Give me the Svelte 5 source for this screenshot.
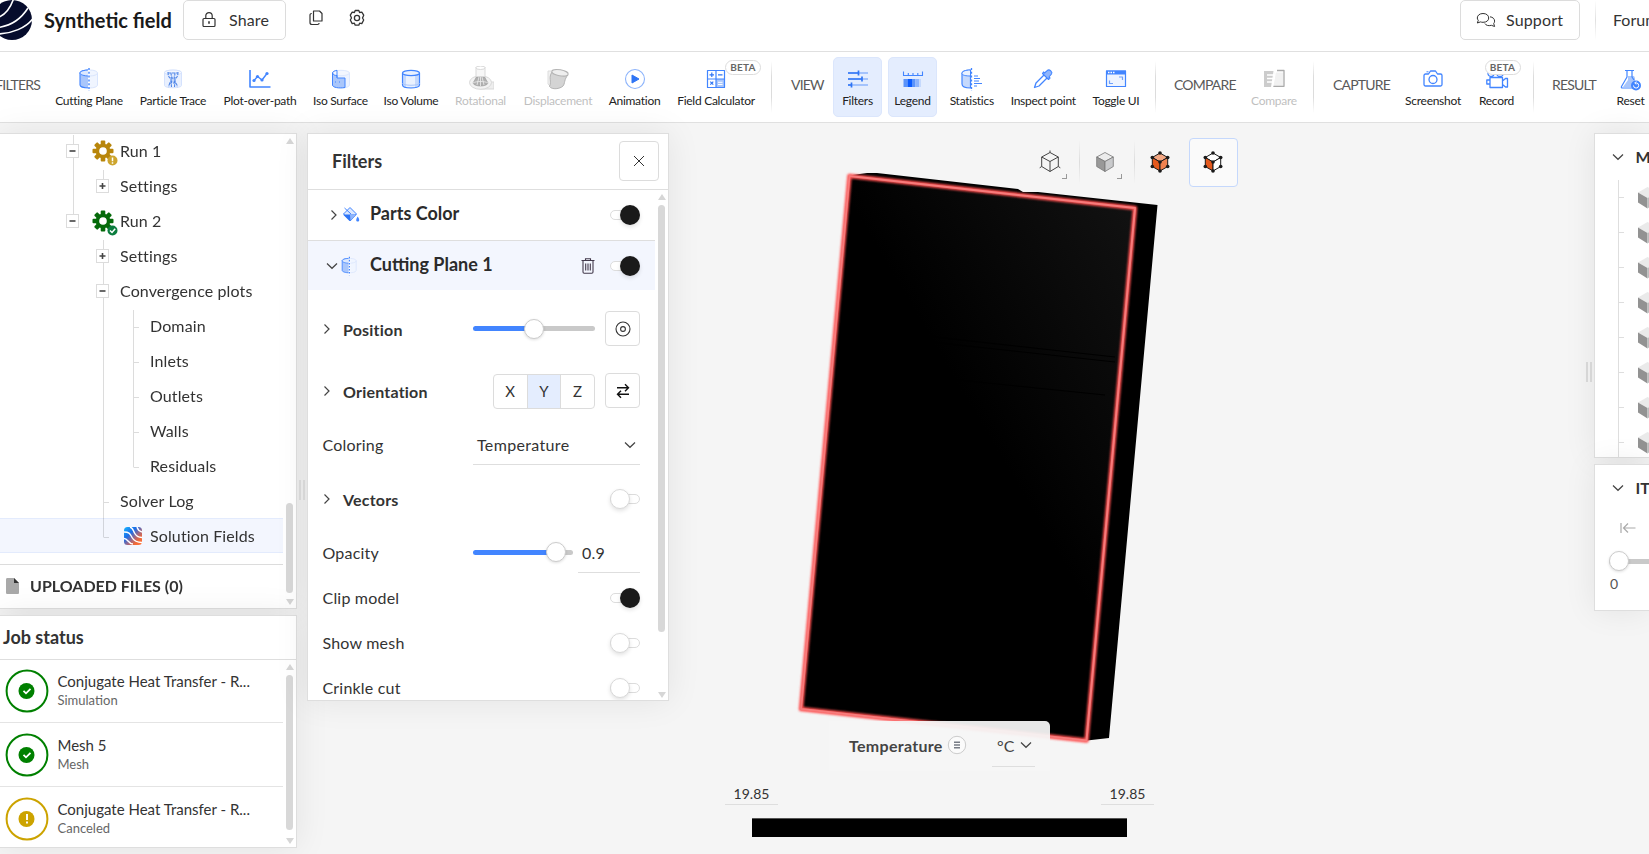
<script>
  const toolbar = [
    { kind: 'label', text: 'FILTERS', w: 47, end: true },
    { icon: 'cut', text: 'Cutting Plane', w: 84 },
    { icon: 'particle', text: 'Particle Trace', w: 84 },
    { icon: 'plot', text: 'Plot-over-path', w: 90 },
    { icon: 'isosurface', text: 'Iso Surface', w: 71 },
    { icon: 'isovolume', text: 'Iso Volume', w: 70 },
    { icon: 'rotational', text: 'Rotational', w: 69, off: true },
    { icon: 'displace', text: 'Displacement', w: 86, off: true },
    { icon: 'play', text: 'Animation', w: 67 },
    { icon: 'calc', text: 'Field Calculator', w: 96, beta: 27 },
    { kind: 'sep', w: 15 },
    { kind: 'label', text: 'VIEW', w: 51 },
    { icon: 'filters', text: 'Filters', w: 55, on: true },
    { icon: 'legend', text: 'Legend', w: 55, on: true },
    { icon: 'stats', text: 'Statistics', w: 63.5 },
    { icon: 'pipette', text: 'Inspect point', w: 79.5 },
    { icon: 'toggle', text: 'Toggle UI', w: 66 },
    { kind: 'sep', w: 13 },
    { kind: 'label', text: 'COMPARE', w: 84 },
    { icon: 'compare', text: 'Compare', w: 56, off: true },
    { kind: 'sep', w: 22 },
    { kind: 'label', text: 'CAPTURE', w: 76, pad: 9 },
    { icon: 'camera', text: 'Screenshot', w: 66 },
    { icon: 'record', text: 'Record', w: 61, beta: 6 },
    { kind: 'sep', w: 13 },
    { kind: 'label', text: 'RESULT', w: 69 },
    { icon: 'reset', text: 'Reset', w: 43 }
  ];

  const tree = [
    { text: 'Run 1', gear: '#b8860b', box: '-', at: 66, warn: true },
    { text: 'Settings', box: '+', at: 96 },
    { text: 'Run 2', gear: '#056a0a', box: '-', at: 66 },
    { text: 'Settings', box: '+', at: 96 },
    { text: 'Convergence plots', box: '-', at: 96 },
    { text: 'Domain', deep: true },
    { text: 'Inlets', deep: true },
    { text: 'Outlets', deep: true },
    { text: 'Walls', deep: true },
    { text: 'Residuals', deep: true },
    { text: 'Solver Log' },
    { text: 'Solution Fields', deep: true, selected: true }
  ];

  const jobs = [
    { title: 'Conjugate Heat Transfer - R...', sub: 'Simulation', ok: true },
    { title: 'Mesh 5', sub: 'Mesh', ok: true },
    { title: 'Conjugate Heat Transfer - R...', sub: 'Canceled', ok: false }
  ];

  const corners = [[0, -9], [7.7, -4.5], [7.7, 4.5], [0, 9], [-7.7, 4.5], [-7.7, -4.5], [0, 0]];
</script>

{#snippet chevron(dir)}
  <svg class="chev" width="12" height="12" viewBox="0 0 12 12" fill="none" stroke="currentColor" stroke-width="1.2">
    {#if dir === 'right'}<path d="M3.5 1.5 8 6l-4.500 4.500" />{:else}<path d="M1 3.500 6 8.300l5-4.800" />{/if}
  </svg>
{/snippet}

{#snippet toggle(on)}
  <span class="toggle" class:on><i></i><b></b></span>
{/snippet}

{#snippet cutIcon()}
  <path d="M11 2C6 2 2 3.300 2 5v12c0 1.700 4 3 9 3z" fill="#a9c6fb" stroke="#4285ff" stroke-width="1.100" />
  <path d="M11 2C6 2 2 3.300 2 5s4 3 9 3z" fill="#dce8fe" stroke="#4285ff" stroke-width="1" />
  <path d="M11 2c5 0 8.500 1.300 8.500 3v12c0 1.700-3.500 3-8.500 3z" fill="#f0f5ff" stroke="#d9e5fd" stroke-width="1" />
  <path d="M11 8c5 0 8.500-1.300 8.500-3" stroke="#d9e5fd" fill="none" />
  <path d="M11 0v23" stroke="#fff" stroke-width="2" /><path d="M11 0v23" stroke="#4285ff" stroke-width="1.400" stroke-dasharray="2 1.800" />
{/snippet}

{#snippet icon(name)}
  <svg class="ticon" width="26" height="26" viewBox="-2 -2 26 26" fill="none" stroke-linejoin="round">
    {#if name === 'cut'}
      {@render cutIcon()}
    {:else if name === 'particle'}
      <path d="M2.500 4.500v13c0 3 17 3 17 0v-13c0-3-17-3-17 0z" fill="#e9f0fe" stroke="#d5e2fd" />
      <ellipse cx="11" cy="4.500" rx="8.500" ry="2.500" fill="#f3f7ff" stroke="#d5e2fd" />
      <g stroke="#4f86e8" stroke-width="1.100" stroke-dasharray="3 1"><path d="M6 4c0 7 3 5 3 8.500s-3 3.500-2 6.500M9 4.500c0 3 1 4 1 7s-1 4-.5 7.500M13 4.500c0 3-1 4-1 7s1 4 .5 7.500M16 4c0 7-3 5-3 8.500s3 3.500 2 6.500M6 5h10M8 10h6M7 15h8" /></g>
    {:else if name === 'plot'}
      <path d="M1 2v17h20.500" stroke="#4285ff" stroke-width="1.600" />
      <path d="m5 12.500 3.500-4 4.500 3.500 5-6.500" stroke="#4285ff" stroke-width="1.400" />
      <g fill="#4285ff"><circle cx="5" cy="12.500" r="1.600" /><circle cx="8.500" cy="8.500" r="1.600" /><circle cx="13" cy="12" r="1.600" /><circle cx="18" cy="5.500" r="1.600" /></g>
    {:else if name === 'isosurface'}
      <path d="M2.500 5v12c0 4 17 4 17 0V5z" fill="#edf3ff" stroke="#dde8fe" /><ellipse cx="11" cy="5" rx="8.500" ry="2.700" fill="#f3f7ff" stroke="#dde8fe" />
      <path d="M2.500 5c1 2 2 2.500 4.500 2.500V10h8v9.500C9 20.500 2.500 19.500 2.500 17z" fill="#a9c6fb" stroke="#4285ff" />
      <path d="M2.500 5c0-1.300 2-2.300 4.500-2.700V9.500" stroke="#4285ff" /><path d="M5 14h1m3 0h1" stroke="#4285ff" />
    {:else if name === 'isovolume'}
      <path d="M2.500 5v12c0 4 17 4 17 0V5z" fill="#c5d9fd" stroke="#4285ff" stroke-width="1.200" />
      <path d="M6 8h9v11H6z" fill="#fff" opacity=".65" /><ellipse cx="11" cy="5" rx="8.500" ry="2.700" fill="#e9f1ff" stroke="#4285ff" stroke-width="1.200" /><path d="M19.500 15c0 3-17 3-17 0" stroke="#a9c6fb" />
    {:else if name === 'rotational'}
      <g stroke="#d9d9d9"><path d="M21 14h3v7H10z" fill="#eee" /><ellipse cx="10.500" cy="14.500" rx="11" ry="6.800" fill="#f2f2f2" /><path d="M6 -1v12h9V-1z" fill="#f7f7f7" /><ellipse cx="10.500" cy="-.2" rx="4.500" ry="1.700" fill="#fff" /></g>
      <path d="M6.500 9h8l3.500 6c-1 4-14 4-15 0z" fill="#b0b0b0" stroke="#999" stroke-width=".6" /><path d="m9 9-2 8m3.500-8v9m1.500-9 2 8M3 15c3-2 12-2 15 0" stroke="#eee" stroke-width=".8" />
    {:else if name === 'displace'}
      <path d="M1 3v13c2 2.500 4 3 6 3V3z" fill="#f1f1f1" stroke="#ddd" /><path d="M5 4C1 10 5 13 2.500 18.500 5 22 13 21 16 18c2-2 1-7 5-11z" fill="#d4d4d4" stroke="#b3b3b3" />
      <ellipse cx="13" cy="4.800" rx="8.300" ry="3" transform="rotate(10 13 4.800)" fill="#eee" stroke="#b3b3b3" />
    {:else if name === 'play'}
      <circle cx="11" cy="11" r="9.500" stroke="#8db4fb" stroke-width="1.100" /><path d="M8 7v8l7-4z" fill="#2f75f5" stroke="#2f75f5" />
    {:else if name === 'calc'}
      <path d="M11 11h9v8.500h-9z" fill="#a9c6fb" /><path d="M2.500 2.500h17v17h-17zM11 2.500v17M2.500 11h17" stroke="#4285ff" stroke-width="1.200" />
      <path d="M4.500 6.800h4.500M6.800 4.500v4.500M13 6.800h4.500M5.300 13.700l3 3m0-3-3 3" stroke="#2f75f5" stroke-width="1.200" /><path d="M13 14.300h4.500M13 16.500h4.500" stroke="#fff" />
    {:else if name === 'filters'}
      <path d="M1 5h20M1 11h20M1 17h20" stroke="#8fb5fc" stroke-width="1.600" /><path d="M1 5h10.500M1 11h14M1 17h4M11.500 2.500v5M15 8.500v5M4.500 14.500v5" stroke="#2f75f5" stroke-width="1.700" />
    {:else if name === 'legend'}
      <path d="M1.500 3.500v4h19v-4M6.300 5v2.500M11 5v2.500M15.800 5v2.500" stroke="#4285ff" stroke-width="1.100" />
      <path d="M1.500 11h4v8h-4z" fill="#5b93fa" /><path d="M5.500 11H10v8H5.500z" fill="#0b5cff" /><path d="M10 11h3.500v8H10z" fill="#5b93fa" /><path d="M13.500 11H17v8h-3.500z" fill="#8fb5fc" /><path d="M17 11h2v8h-2z" fill="#c5d9fd" />
    {:else if name === 'stats'}
      <path d="M9.500 2C4 2 1 3.500 1 5.500V16c0 2.500 3 4 8.500 4z" fill="#c5d9fd" stroke="#4285ff" stroke-width="1.200" /><path d="M1 5.500C1 7.300 5 8 9.500 8V2C4 2 1 3.500 1 5.500" fill="#e9f1ff" stroke="#4285ff" />
      <path d="M10.500 0v23" stroke="#4285ff" stroke-width="1.300" stroke-dasharray="2 1.800" /><path d="M13 8h4M13 10.500h6M13 13h5M13 15.500h8M13 18h3" stroke="#4285ff" stroke-width="1" />
    {:else if name === 'pipette'}
      <path d="M12.500 6.500 4 15l-1.500 4.500L7 18l8.500-8.500" fill="#fff" stroke="#4285ff" stroke-width="1.300" /><path d="m10.500 5.500 6 6 1.500-1.500-1-1 2.500-3c1.500-2-2-5-4-3.700l-3 2.700-1-1z" fill="#8fb5fc" stroke="#4285ff" stroke-width="1.100" />
    {:else if name === 'toggle'}
      <path d="M1.500 3h19v15.500h-19z" fill="#eef4ff" stroke="#4285ff" stroke-width="1.200" /><path d="M1 2.500h20v4H1z" fill="#4285ff" /><path d="M3 4.500h1.500m1 0H7m1 0h1.500" stroke="#fff" stroke-width="1.300" /><path d="M14 9h3.500v3M8 15.500H4.500v-3" stroke="#6fa0fb" stroke-width="1.200" />
    {:else if name === 'compare'}
      <path d="M1 3h9.500L8 19H1z" fill="#ccc" /><path d="M11 4.500h9.500V18H10" fill="#f1f1f1" /><path d="M14 2.500h7v15.800H10" stroke="#aaa" stroke-width="1.300" /><path d="M4 7h7M4 10.500h8M4 14h6" stroke="#fff" stroke-width="1.500" /><path d="m13 0-4 22" stroke="#fff" stroke-width="1.400" />
    {:else if name === 'camera'}
      <path d="M3.500 6h3L8.500 3h5l2 3h3c.7 0 1.500.600 1.500 1.500v9c0 .8-.7 1.500-1.500 1.500h-15c-.8 0-1.500-.7-1.500-1.500v-9C2 6.600 2.700 6 3.500 6z" stroke="#4285ff" stroke-width="1.300" /><circle cx="11" cy="11.500" r="4" stroke="#4285ff" stroke-width="1.300" /><path d="M4.500 3.800h2" stroke="#4285ff" />
    {:else if name === 'record'}
      <g stroke="#4285ff" stroke-width="1.300"><circle cx="5" cy="5.500" r="3" /><circle cx="14" cy="5" r="3.500" /><path d="M4 9.500h12.500v10H4zM4 12H.8v4H4M16.500 13l3-2.500h2v8.500h-2l-3-2.500" fill="#fff" /></g>
    {:else if name === 'reset'}
      <path d="M8 8v4l-5 7h12V10l-1-2z" fill="#a9c6fb" /><path d="M5 2.500h9M7 3v6L1.500 18.500c-.5 1 0 1.500 1 1.500H14M12 3v6l2 3" stroke="#4285ff" stroke-width="1.200" />
      <circle cx="16" cy="17.500" r="5" fill="#4285ff" /><path d="M13.500 17.500a2.600 2.600 0 1 0 2.600-2.600M16.500 13.700l-1.800 1.200 1.600 1.500" stroke="#fff" stroke-width="1" />
    {/if}
  </svg>
{/snippet}

<div class="app">
  <header>
    <svg class="logo" width="32" height="40" viewBox="0 0 32 40">
      <circle cx="12" cy="20" r="20" fill="#060c2c" />
      <g fill="none" stroke="#fff" stroke-width="1.600">
        <path d="M-2 17.500C5 15 10 9 13.500-1" /><path d="M-2 27.500C10 26 21 19 28 8" /><path d="M-2 34C12 33.500 26 28 33 18.500" />
      </g>
    </svg>
    <h1>Synthetic field</h1>
    <button class="hbtn share">
      <svg width="14" height="16" viewBox="0 0 14 16" fill="none" stroke="#333" stroke-width="1.200"><rect x="1" y="6.500" width="12" height="8" rx="1" /><path d="M3.800 6.500V3.800a3.200 3.200 0 0 1 6.400 0v2.700" /><path d="M7 9.300v2.500" stroke-width="1.600" /></svg>
      <span>Share</span>
    </button>
    <svg class="copy" width="14" height="16" viewBox="0 0 14 16" fill="none" stroke="#333" stroke-width="1.200" stroke-linejoin="round"><path d="M4.500 1h6L13 3.500V11H4.500z" /><path d="M2.800 3.500C1.500 3.500 1 4 1 5v7.500C1 14 1.600 14.500 3 14.500h5.500c1 0 1.600-.5 1.600-1.500" /></svg>
    <svg class="cog" width="18" height="18" viewBox="0 0 18 18" fill="none" stroke="#333" stroke-width="1.300" stroke-linejoin="round"><path d="M7.200 1.500h3.600l.8 2 2.200-.3 1.900 3L14.500 9l1.200 2-1.900 3.600-2.200-.4-.8 2H7.200l-.8-2-2.200.4L2.300 11l1.200-2-1.200-2.800 1.900-3 2.200.3z" /><circle cx="9" cy="9" r="2.600" /></svg>
    <div class="grow"></div>
    <button class="hbtn support">
      <svg width="20" height="17" viewBox="0 0 20 17" fill="none" stroke="#333" stroke-width="1" stroke-linejoin="round"><path d="M7 1.500c3.500 0 5.700 1.900 5.700 4.500S10.500 10.300 7 10.300c-.9 0-1.700-.1-2.500-.4L1.300 11l1-2.700C1.600 7.600 1.300 6.800 1.300 6 1.300 3.400 3.600 1.500 7 1.500z" /><path d="M14 4.800c2.800.3 4.600 2 4.600 4.300 0 .9-.3 1.700-.9 2.400l.9 3-3.200-1.200c-3 .9-5.600 0-6.500-1.800" /></svg>
      <span>Support</span>
    </button>
    <i class="hsep"></i>
    <span class="forum">Forum</span>
  </header>

  <nav>
    {#each toolbar as t}
      {#if t.kind === 'label'}
        <span class="label" class:end={t.end} style:width="{t.w}px" style:padding-left="{t.end ? 0 : (t.pad ?? 12)}px">{t.text}</span>
      {:else if t.kind === 'sep'}
        <span class="sep" style:width="{t.w}px"><i></i></span>
      {:else}
        <button class="tool" class:on={t.on} class:off={t.off} style:width="{t.w}px">
          {@render icon(t.icon)}
          <span>{t.text}</span>
          {#if t.beta}<em style:margin-left="{t.beta}px">BETA</em>{/if}
        </button>
      {/if}
    {/each}
  </nav>

  <main>
    <aside class="left">
      <section class="panel treepanel">
        <svg class="guides" width="283" height="430" stroke="#dcdcdc" fill="none">
          <path d="M73.500 1V88M103.500 36v18M103.500 106V403.500M133.500 176V333.500M104 368.500h5M104 403.500h5M134 193.500h5M134 228.500h5M134 263.500h5M134 298.500h5M134 333.500h5" />
        </svg>
        <div class="rows">
        {#each tree as r}
          <div class="row" class:selected={r.selected} class:deep={r.deep}>
            {#if r.box}
              <svg class="exp" width="13" height="14" style:margin-left="{r.at}px"><rect x=".5" y=".5" width="12" height="13" fill="#fff" stroke="#dcdcdc" /><path d={r.box === '+' ? 'M3.500 7h6M6.500 4v6' : 'M3.500 7h6'} stroke="#444" stroke-width="1.600" /></svg>
            {/if}
            {#if r.gear}
              <svg class="gear" width="27" height="26" viewBox="-11 -11 27 26">
                <g fill={r.gear}>{#each [0, 45, 90, 135] as a}<rect x="-2.300" y="-10.500" width="4.600" height="21" rx="1" transform="rotate({a})" />{/each}<circle r="7.300" /></g>
                <circle r="3.800" fill="#fff" />
                <circle cx="9.500" cy="9.500" r="5" fill={r.warn ? '#cda52e' : '#0b7d3e'} />
                {#if r.warn}<path d="M9.500 6.500v3.800m0 1v1.400" stroke="#fff" stroke-width="1.500" />{:else}<path d="m7 9.500 2 2 3.200-3.700" fill="none" stroke="#fff" stroke-width="1.500" />{/if}
              </svg>
            {/if}
            {#if r.selected}
              <svg class="sol" width="18" height="18" viewBox="0 0 18 18">
                <defs><linearGradient id="sf" x1="0" y1="0" x2="1" y2="1"><stop offset="0" stop-color="#16b5ff" /><stop offset=".35" stop-color="#1c6de8" /><stop offset=".6" stop-color="#a9677c" /><stop offset=".78" stop-color="#f26a36" /><stop offset="1" stop-color="#ff7a45" /></linearGradient></defs>
                <rect width="18" height="18" rx="3.500" fill="url(#sf)" />
                <g fill="none" stroke="#fff" stroke-width="1.400"><path d="M0 5c6 0 6 2 8 5.500s5 5 10 5" /><path d="M0 11.500c4 0 4 5 9 5.500" /><path d="M6 0c3 1 3 3 4.500 6S14 10.500 18 10.500" /><path d="M13 0c.5 2 2 4 5 5" /></g>
              </svg>
            {/if}
            <span>{r.text}</span>
          </div>
        {/each}
        </div>
        <div class="uploaded">
          <svg width="13" height="16" viewBox="0 0 13 16"><path d="M1.500 0H8l5 5v9.500c0 1-.5 1.500-1.500 1.500h-10C.5 16 0 15.500 0 14.500v-13C0 .5.500 0 1.500 0z" fill="#a9a9a9" /><path d="M8 0l5 5H8z" fill="#333" /></svg>
          UPLOADED FILES (0)
        </div>
        <div class="scroll t1"><i></i><b></b><u></u></div>
      </section>
      <section class="panel jobs">
        <h2>Job status</h2>
        {#each jobs as j}
          <div class="job">
            <svg width="44" height="44" viewBox="-22 -22 44 44" fill="none">
              <circle r="20.400" stroke={j.ok ? '#008000' : '#cca300'} stroke-width="2" /><circle r="8" cx="-.5" fill={j.ok ? '#008000' : '#cca300'} />
              {#if j.ok}<path d="m-3.500-.2 2.500 2.500 4.500-4.500" stroke="#fff" stroke-width="1.800" />{:else}<path d="M0-5v6m0 1.500v2" stroke="#fff" stroke-width="1.900" />{/if}
            </svg>
            <div><p>{j.title}</p><small>{j.sub}</small></div>
          </div>
        {/each}
        <div class="scroll t2"><i></i><b></b><u></u></div>
      </section>
    </aside>

    <div class="grip"><i></i><i></i></div>

    <section class="panel filters">
      <div class="fhead">
        <h2>Filters</h2>
        <button class="sq close"><svg width="12" height="12" viewBox="0 0 12 12" stroke="#333" stroke-width="1"><path d="m1 1 10 10M11 1 1 11" /></svg></button>
      </div>
      <div class="frow parts">
        {@render chevron('right')}
        <svg class="fi" width="18" height="18" viewBox="0 0 18 18" fill="none"><path d="M8 1.500 14.500 8 8.500 14.500 1.500 8z" fill="#dce8fe" stroke="#4285ff" /><path d="M1 8.500h13.500L8.500 15h-1z" fill="#2f75f5" /><path d="M8 9h6l-5.500 5.500z" fill="#8fb5fc" /><path d="M2.500 2 9 8" stroke="#4285ff" /><path d="M15.700 10.500c1.700 2.500 2.300 5 0 5s-1.700-2.500 0-5z" fill="#4285ff" /></svg>
        <h3>Parts Color</h3>
        {@render toggle(true)}
      </div>
      <div class="frow plane">
        {@render chevron('down')}
        <svg class="fi" width="18" height="20" viewBox="0 -1 21 25" fill="none">{@render cutIcon()}</svg>
        <h3>Cutting Plane 1</h3>
        <svg class="trash" width="14" height="16" viewBox="0 0 14 16" fill="none" stroke="#433a4c" stroke-width="1.100"><path d="M.5 2.500h13M4.500 2V.700h5V2M2 2.500V14c0 .7.500 1.200 1.200 1.200h7.600c.7 0 1.200-.5 1.200-1.200V2.500M4.700 5.500v7M7 5.500v7M9.300 5.500v7" /></svg>
        {@render toggle(true)}
      </div>
      <div class="body">
        <div class="prop tall">
          {@render chevron('right')}<strong>Position</strong>
          <span class="slider w122"><i></i><b></b></span>
          <button class="sq sm"><svg width="16" height="16" viewBox="0 0 16 16" fill="none" stroke="#333" stroke-width="1.100"><circle cx="8" cy="8" r="7" /><circle cx="8" cy="8" r="2.400" /></svg></button>
        </div>
        <div class="prop tall">
          {@render chevron('right')}<strong>Orientation</strong>
          <span class="seg"><span>X</span><span class="cur">Y</span><span>Z</span></span>
          <button class="sq sm"><svg width="14" height="16" viewBox="0 0 14 16" fill="none" stroke="#111" stroke-width="1.400"><path d="M1 4.700h11.500M9 1.200l3.500 3.500L9 8.200M13 11.300H1.500M5 7.800l-3.500 3.500L5 14.800" /></svg></button>
        </div>
        <div class="prop select-row">
          <span class="name">Coloring</span>
          <span class="select">Temperature {@render chevron('down')}</span>
        </div>
        <div class="prop tall">{@render chevron('right')}<strong>Vectors</strong>{@render toggle(false)}</div>
        <div class="prop">
          <span class="name">Opacity</span>
          <span class="slider w100"><i></i><b></b></span>
          <span class="num">0.9</span>
        </div>
        <div class="prop"><span class="name">Clip model</span>{@render toggle(true)}</div>
        <div class="prop"><span class="name">Show mesh</span>{@render toggle(false)}</div>
        <div class="prop"><span class="name">Crinkle cut</span>{@render toggle(false)}</div>
      </div>
      <div class="scroll t3"><i></i><b></b><u></u></div>
    </section>

    <div class="viewer">
      <svg class="model" width="917" height="731" viewBox="669 123 917 731">
        <defs>
          <linearGradient id="face" x1="0" y1="1" x2="1" y2="0"><stop offset=".55" stop-color="#000" /><stop offset="1" stop-color="#131313" /></linearGradient>
          <filter id="glow" x="-5%" y="-5%" width="110%" height="110%"><feGaussianBlur stdDeviation="1.100" /></filter>
        </defs>
        <path d="M849 175.500 867 173h10l141 16 5 3h15L1157.500 205 1109 738l-22 2.500L801 709z" fill="#000" />
        <path d="M849.500 176 1135 208 1086.500 740.500 801 709z" fill="url(#face)" />
        <path d="M925 336 1115 357M930 342 1115 362M860 370 1105 395" stroke="#000" fill="none" />
        <path d="M849.500 176 1135 208 1086.500 740.500 801 709z" fill="none" stroke="#ff4f4f" stroke-width="4.500" stroke-linejoin="round" filter="url(#glow)" />
        <path d="M849.500 176 1135 208 1086.500 740.500 801 709z" fill="none" stroke="#f77b7b" stroke-width="2" stroke-linejoin="round" />
      </svg>

      <div class="modes">
        <span><svg width="22" height="24" viewBox="-11 -12 22 24" fill="none" stroke="#444"><path d="M0-9.500 8.300-5v9.500L0 9.500-8.300 4.500V-5zM-8.300-5 0-.5 8.300-5M0-.5v10" /><path d="M0-9.500v-2M8.300 4.500l2 1.300M-8.300 4.500l-2 1.300" /></svg><i></i></span>
        <span><svg width="22" height="24" viewBox="-11 -12 22 24" stroke="#777" stroke-width=".8" stroke-linejoin="round"><path d="M0-9.500 8.300-5 0-.5-8.300-5z" fill="#ececec" /><path d="M-8.300-5 0-.5v10l-8.300-5z" fill="#999" /><path d="M8.300-5 0-.5v10l8.300-5z" fill="#c9cacc" /></svg><i></i></span>
        <span><svg width="22" height="24" viewBox="-11 -12 22 24" stroke="#1a1a1a"><path d="M0-9 7.700-4.500 0 0-7.700-4.500z" fill="#f5a884" /><path d="M-7.700-4.500 0 0v9l-7.700-4.500z" fill="#e4591d" /><path d="M7.700-4.500 0 0v9l7.700-4.500z" fill="#ef8250" /><g fill="#1a1a1a" stroke="none">{#each corners as [x, y]}<circle cx={x} cy={y} r="1.800" />{/each}</g></svg></span>
        <span class="cur"><svg width="22" height="24" viewBox="-11 -12 22 24" stroke="#1a1a1a"><path d="M0-9 7.700-4.500 0 0-7.700-4.500z" fill="#fff" /><path d="M-7.700-4.500 0 0v9l-7.700-4.500z" fill="#e4591d" /><path d="M7.700-4.500 0 0v9l7.700-4.500z" fill="#fff" /><g fill="#1a1a1a" stroke="none">{#each corners as [x, y]}<circle cx={x} cy={y} r="1.800" />{/each}</g></svg></span>
      </div>

      <div class="legend">
        <div class="ltop">
          <strong>Temperature</strong>
          <svg width="20" height="20" viewBox="0 0 20 20"><circle cx="10" cy="10" r="8.700" fill="#fbfbfb" stroke="#ccc" /><path d="M7 7.200h6M7 10h6M7 12.800h6" stroke="#777c85" stroke-width="1.400" /></svg>
          <span class="unit">°C {@render chevron('down')}</span>
        </div>
        <div class="lvals"><span>19.85</span><span>19.85</span></div>
        <div class="lbar"></div>
      </div>
    </div>

    <div class="grip r"><i></i><i></i></div>
    <aside class="right">
      <section class="panel mesh">
        <div class="rhead">{@render chevron('down')}<strong>M</strong></div>
        <div class="cubes">
          {#each Array(8) as _}
            <div><i></i><svg width="19" height="22" viewBox="0 0 19 22"><path d="M9.500 0 19 5.500 9.500 11 0 5.500z" fill="#eaeaea" /><path d="M0 5.500 9.500 11v10.500L0 15.500z" fill="#929292" /><path d="M19 5.500 9.500 11v10.500l9.500-6z" fill="#bdbdbd" /></svg></div>
          {/each}
        </div>
      </section>
      <section class="panel iter">
        <div class="rhead">{@render chevron('down')}<strong>IT</strong></div>
        <svg class="first" width="16" height="12" viewBox="0 0 16 12" fill="none" stroke="#aaa" stroke-width="1.200"><path d="M1 1v10M3.500 6H15.500M8 1.500 3.500 6 8 10.500" /></svg>
        <span class="slider wr"><i></i><b></b></span>
        <span class="zero">0</span>
      </section>
    </aside>
  </main>
</div>

<style>
  :global(body) { margin: 0; overflow: hidden; }
  * { box-sizing: border-box; }
  .app { width: 1649px; height: 854px; overflow: hidden; display: flex; flex-direction: column; font: 16px Lato, sans-serif; color: #333; background: #f5f5f5; }
  button { font: inherit; color: inherit; background: none; border: 0; padding: 0; margin: 0; }
  h1, h2, h3, p { margin: 0; }
  svg { flex: none; display: block; }
  strong { font-weight: 700; }

  header { height: 52px; flex: none; background: #fff; border-bottom: 1px solid #e0e0e0; display: flex; align-items: flex-start; }
  .logo { margin-right: 12px; }
  h1 { font-size: 20px; line-height: 40px; color: #1a1a1a; width: 139px; white-space: nowrap; }
  .hbtn { height: 40px; border: 1px solid #dcdcdc; border-radius: 5px; background: #fff; display: flex; align-items: center; }
  .hbtn span { margin-top: -2px; letter-spacing: .15px; }
  .share { width: 103px; padding-left: 18px; gap: 13px; }
  .copy { margin: 10px 0 0 23px; }
  .cog { margin: 9px 0 0 25px; }
  .grow { flex: 1; }
  .support { width: 120px; padding-left: 15px; gap: 10px; }
  .hsep { width: 1px; height: 40px; margin: 0 17px 0 15px; background: linear-gradient(transparent, #e0e0e0, transparent); }
  .forum { width: 36px; line-height: 39px; overflow: hidden; }

  nav { height: 71px; flex: none; background: #fff; border-bottom: 1px solid #e0e0e0; display: flex; overflow: hidden; }
  nav > * { flex: none; }
  .label { font-size: 14px; line-height: 66px; color: #595959; white-space: nowrap; letter-spacing: -.8px; }
  .label.end { direction: rtl; padding-right: 7px; }
  .sep { display: flex; justify-content: center; }
  .sep i { width: 1px; height: 52px; margin-top: 9px; background: linear-gradient(transparent, #dcdcdc 30%, #dcdcdc 70%, transparent); }
  .tool { position: relative; display: flex; flex-direction: column; align-items: center; height: 60px; margin-top: 5px; padding-top: 9px; font-size: 12px; letter-spacing: -.27px; white-space: nowrap; color: #222; }
  .tool span { line-height: 16px; margin-top: 1px; }
  .tool.on::before { content: ''; position: absolute; inset: 0 3px; background: #e4edfe; border-radius: 5px; border: 1px solid #dbe6fc; }
  .tool.on > * { position: relative; }
  .tool.off { color: #bfbfbf; }
  .tool em { position: absolute; top: 3px; left: 50%; transform: translateX(-18px); border: 1px solid #dcdcdc; border-radius: 8px; background: #fff; font: 700 10px/13px Lato, sans-serif; letter-spacing: .2px; color: #666; width: 36px; text-align: center; }

  main { flex: 1; min-height: 0; display: flex; align-items: flex-start; }
  .panel { background: #fff; border: 1px solid #dedede; box-shadow: 0 0 32px rgba(0, 0, 0, .08); position: relative; overflow: hidden; z-index: 1; }
  .left { width: 297px; flex: none; padding-top: 10px; display: flex; flex-direction: column; gap: 6px; }
  .left .panel { border-left: 0; }
  .treepanel { height: 476px; }
  .guides { position: absolute; left: 0; top: 0; z-index: 1; mix-blend-mode: multiply; }
  .rows { margin-top: -1px; }
  .row { height: 35px; width: 283px; display: flex; align-items: center; letter-spacing: .12px; }
  .row > span { margin-left: auto; width: 163px; line-height: 35px; }
  .row.deep > span { width: 133px; }
  .row.selected { background: #f3f6fe; border: solid #e3ebfd; border-width: 1px 0; }
  .exp { position: relative; z-index: 2; }
  .gear { margin: 4px -12px 0 12.500px; }
  .sol { margin-left: 123.500px; }
  .uploaded { width: 283px; margin-top: 11px; border-top: 1px solid #dcdcdc; height: 42px; display: flex; align-items: center; gap: 11px; padding-left: 6px; font-weight: 700; }
  .scroll { position: absolute; right: 2px; width: 9px; display: flex; flex-direction: column; align-items: center; }
  .scroll i, .scroll u { flex: none; border: 4.500px solid transparent; width: 0; height: 0; }
  .scroll i { border-top: 0; border-bottom: 6px solid #d6d6d6; }
  .scroll u { border-bottom: 0; border-top: 6px solid #d6d6d6; }
  .scroll b { width: 7px; border-radius: 4px; background: #d8d8d8; flex: 1; }
  .t1 { top: 4px; bottom: 3px; } .t1 b { margin: 359px 0 6px; }
  .t2 { top: 48px; bottom: 3px; } .t2 b { margin: 5px 0 8px; }

  .jobs { height: 233px; }
  h2 { font-size: 18px; }
  .jobs h2 { line-height: 42px; height: 44px; padding-left: 3px; border-bottom: 1px solid #dedede; }
  .job { width: 283px; height: 63px; display: flex; align-items: center; gap: 9px; padding-left: 4.500px; border-bottom: 1px solid #e4e4e4; }
  .job:nth-child(3) { height: 64px; }
  .job:nth-child(4) { border: 0; }
  .job div { margin-top: -1px; }
  .job p { font-size: 15px; line-height: 20px; white-space: nowrap; }
  .job small { display: block; font-size: 13px; line-height: 19px; color: #666; }

  .grip { width: 10px; flex: none; display: flex; gap: 2px; padding: 357px 0 0 2px; position: relative; z-index: 2; }
  .grip i { width: 2px; height: 20px; background: #d6d6d6; }
  .grip.r { width: 8px; padding: 239px 0 0 0; }

  .filters { width: 362px; flex: none; height: 568px; margin-top: 10px; }
  .fhead { height: 56px; border-bottom: 1px solid #dedede; display: flex; align-items: center; justify-content: space-between; padding: 0 9px 0 24px; }
  .fhead h2 { margin-top: -2px; }
  .sq { border: 1px solid #dcdcdc; border-radius: 4px; display: flex; align-items: center; justify-content: center; flex: none; }
  .close { width: 40px; height: 40px; margin-top: -1px; }
  .sm { width: 35px; height: 35px; margin: -1px 0 0 10px; }
  .frow { width: 347px; height: 51px; display: flex; align-items: center; padding-right: 15px; }
  .frow h3 { font-size: 18px; flex: 1; margin: -4px 0 0 10px; line-height: 28px; color: #2b2b2b; }
  .parts { border-bottom: 1px solid #dedede; padding-left: 20px; }
  .parts .fi { margin-left: 2px; }
  .plane { background: #f3f6fe; height: 49px; padding-left: 18px; }
  .plane .fi { margin: 0 2px 0 2px; }
  .trash { margin-right: 15px; }
  .toggle { width: 30px; height: 20px; display: flex; align-items: center; position: relative; margin-left: auto; flex: none; }
  .toggle i { width: 30px; height: 10px; border: 1px solid #dcdcdc; border-radius: 5px; background: #fff; }
  .toggle b { position: absolute; left: 0; width: 20px; height: 20px; border-radius: 50%; background: #fff; border: 1px solid #d9d9d9; box-shadow: 0 2px 4px rgba(0, 0, 0, .12); }
  .toggle.on b { left: 10px; background: #1a1a1a; border: 0; }
  .body { padding: 8px 0 0 14px; width: 332px; }
  .prop { height: 45px; display: flex; align-items: center; letter-spacing: .2px; }
  .prop.tall { height: 62px; }
  .prop .chev { margin-left: -1px; }
  .prop strong { margin-left: 10px; font-size: 16px; flex: 1; font-variant-ligatures: none; }
  .name { flex: 1; font-size: 16px; padding-left: .500px; margin-top: -1px; }
  .select-row { height: 46px; align-items: stretch; line-height: 47px; }
  .select { width: 167px; height: 43px; border-bottom: 1px solid #dedede; padding: 3px 4px 0 4px; display: flex; align-items: center; justify-content: space-between; line-height: 20px; letter-spacing: .35px; }
  .slider { position: relative; height: 20px; display: flex; align-items: center; flex: none; margin-top: -1px; }
  .slider i { width: 100%; height: 5px; border-radius: 3px; }
  .slider b { position: absolute; width: 20px; height: 20px; border-radius: 50%; border: 1px solid #ccc; background: #fff; box-shadow: 0 1px 3px rgba(0, 0, 0, .14); }
  .w122 { width: 122px; } .w122 i { background: linear-gradient(90deg, #4285ff 50%, #c9c9c9 50%); } .w122 b { left: 51px; }
  .w100 { width: 100px; } .w100 i { background: linear-gradient(90deg, #4285ff 83%, #c9c9c9 83%); } .w100 b { left: 73px; }
  .num { width: 62px; height: 41px; line-height: 41px; margin-left: 5px; padding-left: 4px; border-bottom: 1px solid #dedede; }
  .seg { display: flex; border: 1px solid #dcdcdc; border-radius: 4px; height: 35px; width: 102px; line-height: 33px; text-align: center; font-size: 15px; overflow: hidden; }
  .seg span { flex: 1; } .seg .cur { background: #e4edfe; border: solid #dcdcdc; border-width: 0 1px; }
  .t3 { top: 60px; bottom: 2px; } .t3 b { margin: 5px 0 60px; }

  .viewer { flex: 1; height: 731px; position: relative; min-width: 0; }
  .model { position: absolute; left: 0; top: 0; }
  .modes { position: absolute; left: 354px; top: 15px; display: flex; }
  .modes span { width: 55px; height: 48px; display: flex; align-items: center; justify-content: center; position: relative; border-right: 1px solid transparent; }
  .modes span:nth-child(-n+2)::after { content: ''; position: absolute; right: -3px; top: 2px; width: 1px; height: 44px; background: linear-gradient(transparent, #dcdcdc, transparent); }
  .modes span i { position: absolute; right: 10px; bottom: 7px; width: 5px; height: 5px; border: solid #999; border-width: 0 1px 1px 0; }
  .modes .cur { width: 49px; height: 49px; margin-left: 1px; border: 1px solid #c5d8fc; border-radius: 4px; background: #fafafa; }
  .modes .cur svg { margin: -1px 2px 0 0; }
  .legend { position: absolute; left: 56px; top: 598px; width: 429px; display: flex; flex-direction: column; align-items: center; }
  .ltop { width: 221px; height: 50px; padding: 0 0 2px 20px; background: rgba(245, 245, 245, .94); border-radius: 0 5px 0 0; display: flex; align-items: center; font-size: 16px; color: #444; }
  .ltop strong { width: 98px; letter-spacing: .3px; }
  .unit { width: 43px; height: 45px; margin: 0 0 0 25px; border-bottom: 1px solid #dedede; padding: 3px 3px 0 5px; display: flex; align-items: center; justify-content: space-between; position: relative; top: -1px; white-space: nowrap; }
  .lvals { width: 100%; display: flex; justify-content: space-between; margin-top: 10px; }
  .lvals span { width: 53px; text-align: center; font-size: 14px; line-height: 25px; height: 24px; border-bottom: 1px solid #dedede; }
  .lbar { width: 375px; height: 19px; margin-top: 13px; background: #000; border-top: 1px solid #555; }

  .right { width: 55px; flex: none; padding-top: 10px; display: flex; flex-direction: column; gap: 6px; }
  .right .panel { border-right: 0; }
  .mesh { height: 325px; } .iter { height: 147px; }
  .rhead { display: flex; align-items: center; gap: 12px; height: 46px; padding-left: 16.500px; }
  .rhead strong { margin-top: -2px; }
  .rhead .chev { margin-top: -1px; }
  .chev { color: #444; }
  .cubes { margin-left: 23px; border-left: 1px solid #dedede; height: 300px; }
  .cubes div { height: 35px; display: flex; align-items: center; width: 60px; }
  .cubes i { width: 5px; height: 1px; background: #dedede; margin-right: 14px; }
  .first { margin: 11px 0 0 25px; }
  .wr { width: 100px; margin: 17px 0 0 14px; } .wr i { background: #c9c9c9; } .wr b { left: 0; }
  .zero { display: block; font-size: 14px; margin: 4px 0 0 15px; color: #555; }
</style>
